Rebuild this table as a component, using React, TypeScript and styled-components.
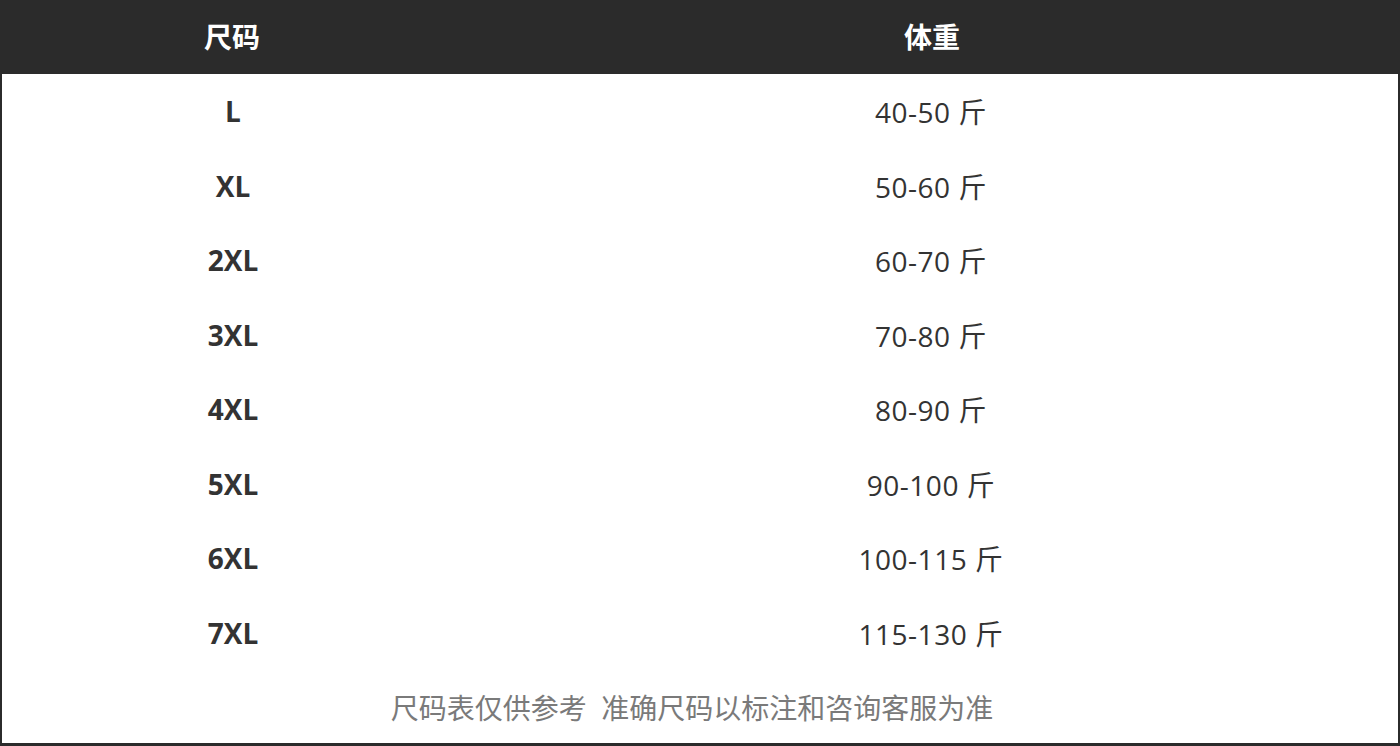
import React from "react";
import styled, { createGlobalStyle } from "styled-components";

const Global = createGlobalStyle`
  html, body { margin: 0; padding: 0; background: #fff; }
  body { font-family: "Open Sans", "Noto Sans CJK SC", sans-serif; }
  * { box-sizing: border-box; }
`;

const Table = styled.div`
  width: 1400px;
  height: 746px;
  display: grid;
  grid-template-columns: 462px 1fr;
  grid-template-rows: 74px repeat(8, 1fr) 73px;
  border-left: 2px solid #2b2b2b;
  border-right: 2px solid #2b2b2b;
  border-bottom: 3px solid #2b2b2b;
  font-family: "Open Sans", "Noto Sans CJK SC", sans-serif;
`;

const HeadCell = styled.div<{ $edge: "l" | "r" }>`
  background: #2b2b2b;
  color: #fff;
  font-weight: 700;
  font-size: 28px;
  display: flex;
  align-items: center;
  justify-content: center;
  padding-bottom: 2px;
  margin-left: ${(p) => (p.$edge === "l" ? "-2px" : "0")};
  margin-right: ${(p) => (p.$edge === "r" ? "-2px" : "0")};
`;

const Cell = styled.div<{ $bold?: boolean }>`
  display: flex;
  align-items: center;
  justify-content: center;
  font-size: 28px;
  color: #333;
  font-weight: ${(p) => (p.$bold ? 700 : 400)};
  letter-spacing: ${(p) => (p.$bold ? "0" : "0.5px")};
`;

const Note = styled.div`
  grid-column: 1 / -1;
  display: flex;
  align-items: center;
  justify-content: center;
  font-size: 28px;
  color: #7a7a7a;
  white-space: pre;
  padding-right: 16px;
`;

const rows: [string, string][] = [
  ["L", "40-50 斤"],
  ["XL", "50-60 斤"],
  ["2XL", "60-70 斤"],
  ["3XL", "70-80 斤"],
  ["4XL", "80-90 斤"],
  ["5XL", "90-100 斤"],
  ["6XL", "100-115 斤"],
  ["7XL", "115-130 斤"],
];

export default function App() {
  return (
    <>
      <Global />
      <Table>
        <HeadCell $edge="l">尺码</HeadCell>
        <HeadCell $edge="r">体重</HeadCell>
        {rows.map(([s, w]) => (
          <React.Fragment key={s}>
            <Cell $bold>{s}</Cell>
            <Cell>{w}</Cell>
          </React.Fragment>
        ))}
        <Note>尺码表仅供参考  准确尺码以标注和咨询客服为准</Note>
      </Table>
    </>
  );
}
